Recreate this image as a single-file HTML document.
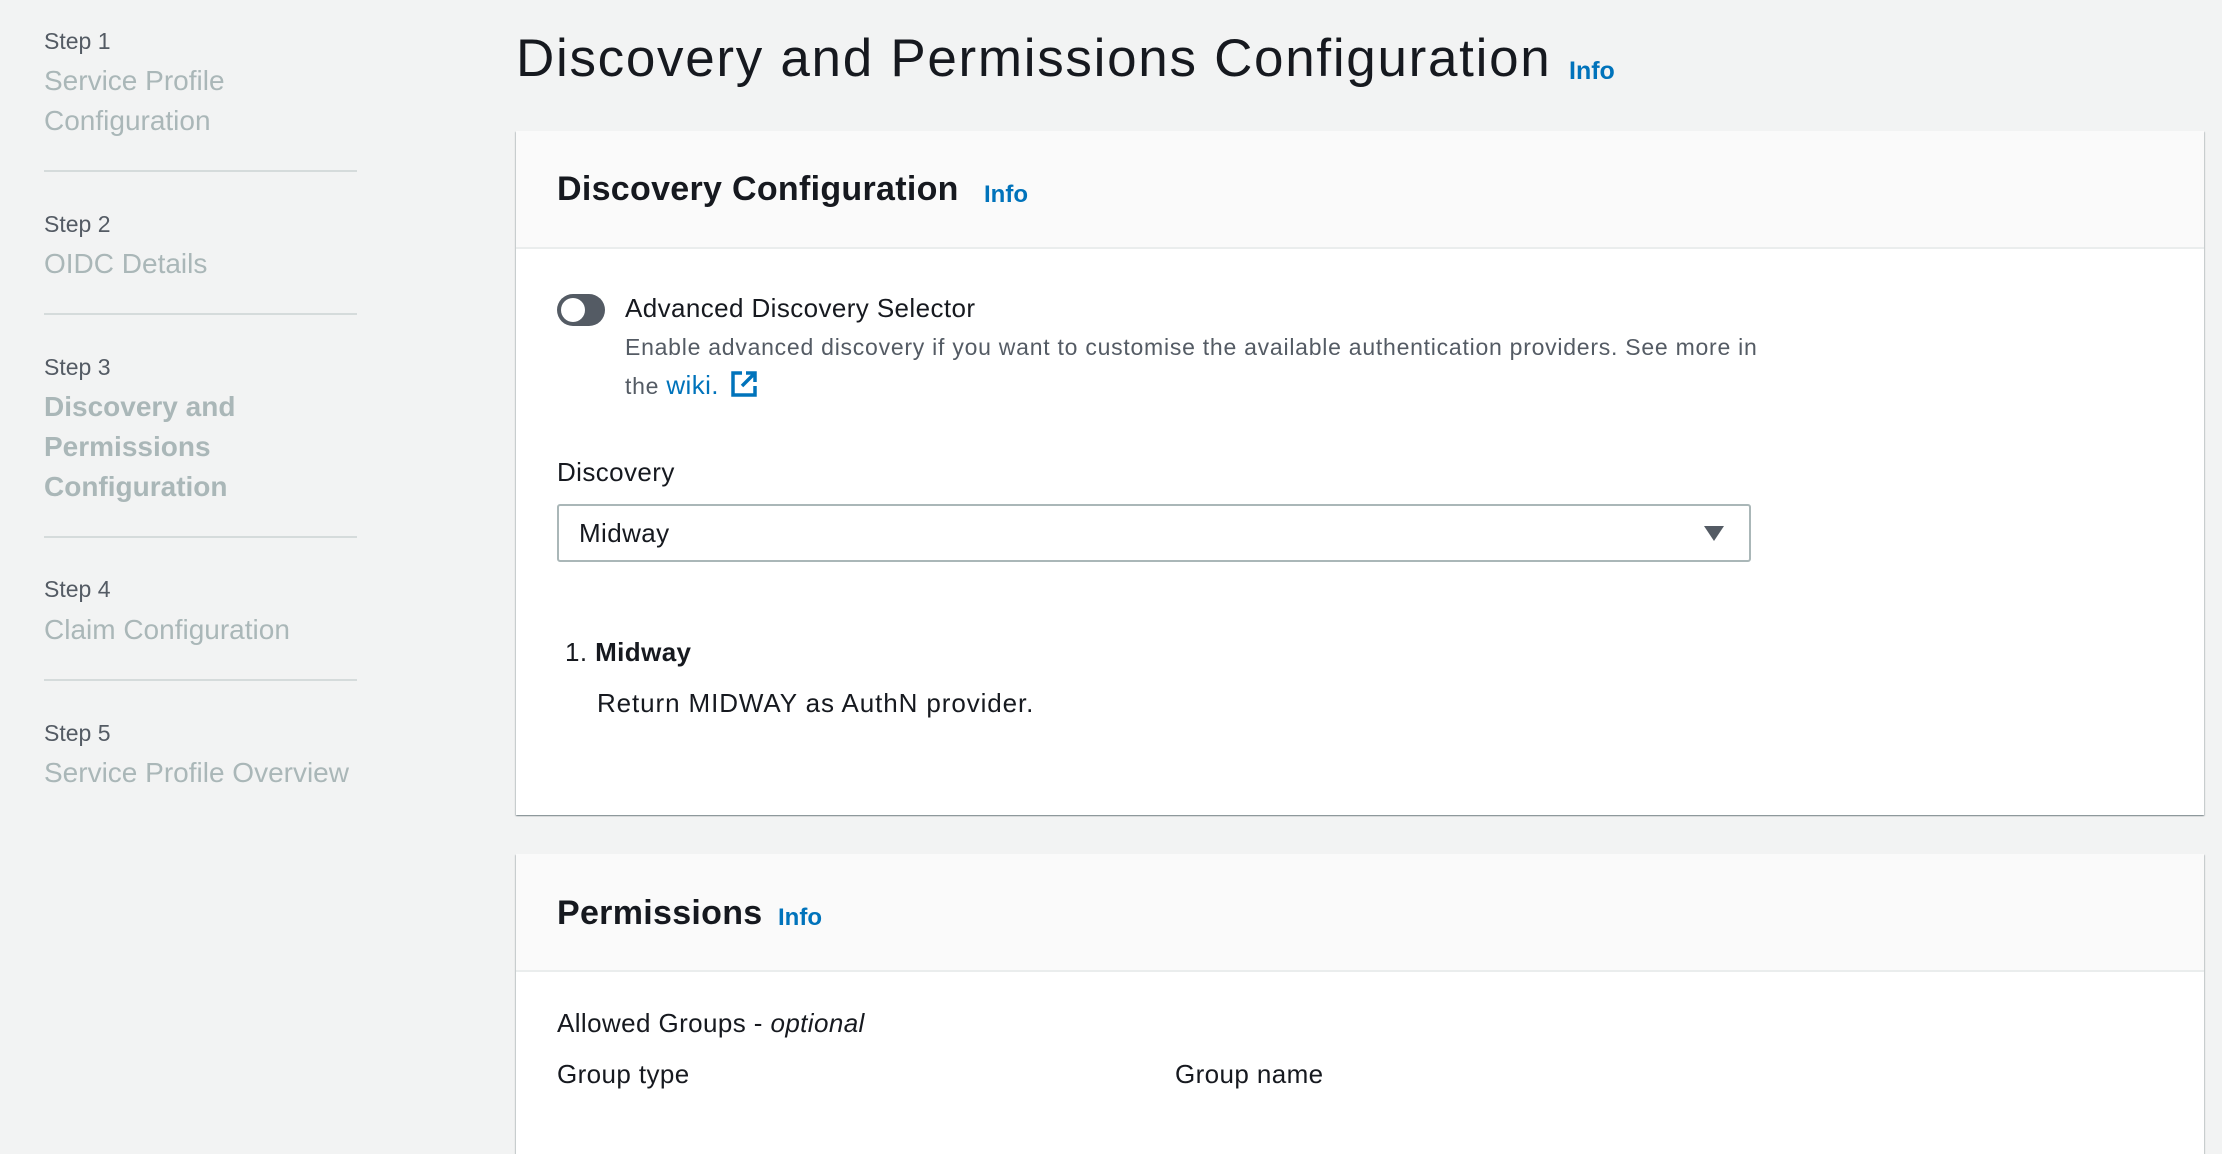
<!DOCTYPE html>
<html><head><meta charset="utf-8"><style>
*{margin:0;padding:0;box-sizing:border-box}
body{width:2222px;height:1086px;overflow:hidden;background:#f2f3f3;font-family:"Liberation Sans",sans-serif;color:#16191f;position:relative;letter-spacing:0.4px}
.a{position:absolute;white-space:nowrap}
.step{font-size:23px;color:#545b64;letter-spacing:0}
.lab{font-size:28px;color:#aab7b8;line-height:40px;letter-spacing:0}
.div{position:absolute;left:44px;width:313px;height:2px;background:#d5dbdb}
.info{color:#0073bb;font-weight:bold;letter-spacing:0}
.card{position:absolute;left:516px;width:1688px;background:#fff;box-shadow:0 1px 1px 0 rgba(0,28,36,.3),1px 1px 1px 0 rgba(0,28,36,.15),-1px 1px 1px 0 rgba(0,28,36,.15)}
.hdr{position:absolute;left:0;top:0;width:100%;background:#fafafa;border-bottom:2px solid #eaeded}
</style></head><body>
<div class="a step" style="left:44px;top:28px">Step 1</div>
<div class="a lab" style="left:44px;top:61px">Service Profile<br>Configuration</div>
<div class="div" style="top:170px"></div>
<div class="a step" style="left:44px;top:211px">Step 2</div>
<div class="a lab" style="left:44px;top:244px">OIDC Details</div>
<div class="div" style="top:313px"></div>
<div class="a step" style="left:44px;top:354px">Step 3</div>
<div class="a lab" style="left:44px;top:387px;font-weight:bold">Discovery and<br>Permissions<br>Configuration</div>
<div class="div" style="top:536px"></div>
<div class="a step" style="left:44px;top:576px">Step 4</div>
<div class="a lab" style="left:44px;top:610px">Claim Configuration</div>
<div class="div" style="top:679px"></div>
<div class="a step" style="left:44px;top:720px">Step 5</div>
<div class="a lab" style="left:44px;top:753px">Service Profile Overview</div>

<div class="a" style="left:516px;top:28px;font-size:53px;letter-spacing:1.7px">Discovery and Permissions Configuration</div>
<div class="a info" style="left:1569px;top:57px;font-size:25px">Info</div>

<div class="card" style="top:131px;height:684px">
  <div class="hdr" style="height:118px"></div>
  <div class="a" style="left:41px;top:39px;font-size:34px;font-weight:bold;letter-spacing:0.3px">Discovery Configuration</div>
  <div class="a info" style="left:468px;top:50px;font-size:24px">Info</div>
  <div class="a" style="left:41px;top:163px;width:48px;height:32px;border-radius:16px;background:#545b64"></div>
  <div class="a" style="left:45px;top:167px;width:24px;height:24px;border-radius:12px;background:#fff"></div>
  <div class="a" style="left:109px;top:162px;font-size:26px">Advanced Discovery Selector</div>
  <div class="a" style="left:109px;top:197px;font-size:23px;color:#545b64;line-height:38px;letter-spacing:0.75px">Enable advanced discovery if you want to customise the available authentication providers. See more in<br>the <span style="color:#0073bb;font-size:26px;letter-spacing:0.4px">wiki.</span>
  <svg width="28" height="28" viewBox="0 0 28 28" style="vertical-align:-4px;margin-left:4px"><path d="M12 3H3v22h22v-9" fill="none" stroke="#0073bb" stroke-width="3.5"/><path d="M16 3h9v9M25 3L12 16" fill="none" stroke="#0073bb" stroke-width="3.5"/></svg></div>
  <div class="a" style="left:41px;top:326px;font-size:26px">Discovery</div>
  <div class="a" style="left:41px;top:373px;width:1194px;height:58px;border:2px solid #aab7b8;border-radius:3px;background:#fff"></div>
  <div class="a" style="left:63px;top:387px;font-size:26px">Midway</div>
  <svg class="a" style="left:1188px;top:395px" width="20" height="16"><path d="M0 0H20L10 15Z" fill="#545b64"/></svg>
  <div class="a" style="left:49px;top:506px;font-size:26px">1. <b>Midway</b></div>
  <div class="a" style="left:81px;top:557px;font-size:26px;letter-spacing:0.9px">Return MIDWAY as AuthN provider.</div>
</div>

<div class="card" style="top:854px;height:300px">
  <div class="hdr" style="height:118px"></div>
  <div class="a" style="left:41px;top:40px;font-size:34px;font-weight:bold;letter-spacing:0.3px">Permissions</div>
  <div class="a info" style="left:262px;top:50px;font-size:24px">Info</div>
  <div class="a" style="left:41px;top:154px;font-size:26px">Allowed Groups - <i>optional</i></div>
  <div class="a" style="left:41px;top:205px;font-size:26px">Group type</div>
  <div class="a" style="left:659px;top:205px;font-size:26px">Group name</div>
</div>
</body></html>
